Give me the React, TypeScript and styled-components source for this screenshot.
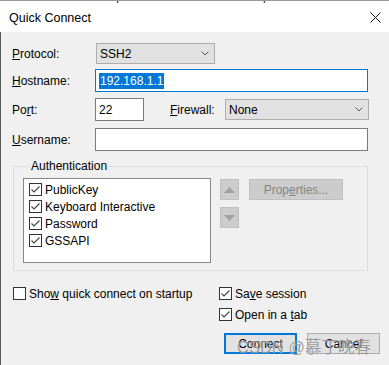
import React from 'react';
import styled, { createGlobalStyle } from 'styled-components';

const GlobalStyle = createGlobalStyle`
  html, body { margin: 0; padding: 0; background: #f0f0f0; }
  body { font-family: 'Liberation Sans', Arial, sans-serif; font-size: 11px; color: #000; }
  * { box-sizing: border-box; }
`;

const Page = styled.div`
  width: 389px;
  height: 365px;
  overflow: hidden;
  position: relative;
  background: #f0f0f0;
`;

/* remains of the main window's menu bar above the dialog */
const MenuStrip = styled.div`
  height: 3px;
  overflow: hidden;
  background: #fff;
  border-top: 1px solid #9a9a9a;
  div {
    display: flex;
    gap: 16px;
    margin-top: -11px;
    margin-left: -22px;
    font-size: 12px;
    line-height: 14px;
    color: #222;
  }
`;

const TitleBar = styled.div`
  height: 29px;
  background: #fff;
  display: flex;
  align-items: center;
  justify-content: space-between;
  padding: 0 8px 0 9px;
  font-size: 12.5px;
`;

const Body = styled.div`
  border-left: 1px solid #5a5a5a;
  height: 333px;
  padding: 11px 0 0 11px;
  display: flex;
  flex-direction: column;
`;

const Row = styled.div<{ $mt?: number }>`
  display: flex;
  align-items: center;
  margin-top: ${(p) => p.$mt ?? 0}px;
`;

const Label = styled.span<{ $w?: number; $ml?: number }>`
  width: ${(p) => p.$w ?? 83}px;
  margin-left: ${(p) => p.$ml ?? 0}px;
  flex: none;
  white-space: nowrap;
  font-size: 12px;
`;

const Combo = styled.div<{ $w: number }>`
  width: ${(p) => p.$w}px;
  height: 21px;
  background: #e1e1e1;
  border: 1px solid #adadad;
  display: flex;
  align-items: center;
  justify-content: space-between;
  padding: 0 5px 0 3px;
  font-size: 12px;
`;

const Input = styled.div<{ $w: number; $focus?: boolean }>`
  width: ${(p) => p.$w}px;
  height: 23px;
  background: #fff;
  border: 1px solid ${(p) => (p.$focus ? '#0078d7' : '#7a7a7a')};
  display: flex;
  align-items: center;
  padding: 0 3px;
  font-size: 12px;
`;

const Selected = styled.span`
  background: #0078d7;
  color: #fff;
  padding: 1px 1px;
`;

const Group = styled.fieldset`
  margin: 9px 0 0 1px;
  width: 355px;
  height: 111px;
  border: 1px solid #dcdcdc;
  padding: 0 0 0 9px;
  display: flex;
  align-items: flex-start;
  legend {
    margin-left: 6px;
    padding: 0 2px;
    font-size: 12px;
    line-height: 13px;
  }
`;

const ListBox = styled.div`
  margin-top: 5px;
  width: 188px;
  height: 85px;
  background: #fff;
  border: 1px solid #828790;
  padding: 4px 0 0 5px;
  display: flex;
  flex-direction: column;
  gap: 4px;
`;

const SideButtons = styled.div`
  margin: 6px 0 0 9px;
  display: flex;
  flex-direction: column;
  gap: 7px;
`;

const ArrowButton = styled.div`
  width: 19px;
  height: 21px;
  background: #cccccc;
  border: 1px solid #bfbfbf;
  display: flex;
  align-items: center;
  justify-content: center;
`;

const PropButton = styled.div`
  margin: 6px 0 0 10px;
  width: 94px;
  height: 21px;
  background: #cccccc;
  border: 1px solid #bfbfbf;
  color: #838383;
  display: flex;
  align-items: center;
  justify-content: center;
  font-size: 12px;
`;

const CheckRow = styled.label`
  display: flex;
  align-items: center;
  gap: 3px;
  height: 13px;
  white-space: nowrap;
  font-size: 12px;
`;

const Box = styled.span`
  width: 13px;
  height: 13px;
  flex: none;
  border: 1px solid #333;
  background: #fff;
  display: flex;
  align-items: center;
  justify-content: center;
`;

const Bottom = styled.div`
  margin-top: 16px;
  display: flex;
`;

const LeftCol = styled.div`
  width: 207px;
  padding-left: 1px;
`;

const RightCol = styled.div`
  display: flex;
  flex-direction: column;
  gap: 8px;
`;

const Buttons = styled.div`
  margin: 4px 0 0 5px;
  display: flex;
  gap: 10px;
`;

const Button = styled.div<{ $default?: boolean }>`
  width: 73px;
  height: 21px;
  background: #e1e1e1;
  border: ${(p) => (p.$default ? '2px solid #0078d7' : '1px solid #adadad')};
  display: flex;
  align-items: center;
  justify-content: center;
  font-size: 12px;
`;

const Watermark = styled.div`
  position: absolute;
  left: 237px;
  top: 334px;
  font-family: 'Liberation Sans', 'Noto Sans CJK SC', sans-serif;
  font-size: 16.5px;
  color: rgba(90, 90, 90, 0.62);
  text-shadow: 0 0 1px rgba(255, 255, 255, 0.9);
  white-space: nowrap;
  pointer-events: none;
`;

const Chevron = () => (
  <svg width="8" height="5" viewBox="0 0 8 5">
    <path d="M0.5 0.5 L4 4 L7.5 0.5" fill="none" stroke="#555" strokeWidth="1" />
  </svg>
);

const Check: React.FC<{ on?: boolean }> = ({ on }) => (
  <Box>
    {on && (
      <svg width="11" height="11" viewBox="0 0 11 11">
        <path d="M1.5 5.5 L4 8 L9.5 2.5" fill="none" stroke="#444" strokeWidth="1.1" />
      </svg>
    )}
  </Box>
);

const Triangle: React.FC<{ up?: boolean }> = ({ up }) => (
  <svg width="11" height="6" viewBox="0 0 11 6">
    <path d={up ? 'M0 6 L5.5 0 L11 6 Z' : 'M0 0 L5.5 6 L11 0 Z'} fill="#a0a0a0" />
  </svg>
);

const authMethods = ['PublicKey', 'Keyboard Interactive', 'Password', 'GSSAPI'];

const App: React.FC = () => (
  <Page>
    <GlobalStyle />
    <MenuStrip>
      <div>
        <span>Options</span>
        <span>Transfer</span>
        <span>Script</span>
        <span>Tools</span>
        <span>Window</span>
        <span>Help</span>
      </div>
    </MenuStrip>
    <TitleBar>
      <span>Quick Connect</span>
      <svg width="11" height="11" viewBox="0 0 11 11">
        <path d="M0.5 0.5 L10.5 10.5 M10.5 0.5 L0.5 10.5" stroke="#111" strokeWidth="1" />
      </svg>
    </TitleBar>
    <Body>
      <Row>
        <Label $w={84}><u>P</u>rotocol:</Label>
        <Combo $w={119}>
          <span>SSH2</span>
          <Chevron />
        </Combo>
      </Row>
      <Row $mt={5}>
        <Label><u>H</u>ostname:</Label>
        <Input $w={273} $focus>
          <Selected>192.168.1.1</Selected>
        </Input>
      </Row>
      <Row $mt={6}>
        <Label>Po<u>r</u>t:</Label>
        <Input $w={49}>22</Input>
        <Label $w={55} $ml={26}><u>F</u>irewall:</Label>
        <Combo $w={144}>
          <span>None</span>
          <Chevron />
        </Combo>
      </Row>
      <Row $mt={7}>
        <Label><u>U</u>sername:</Label>
        <Input $w={273} />
      </Row>
      <Group>
        <legend>Authentication</legend>
        <ListBox>
          {authMethods.map((m) => (
            <CheckRow key={m}>
              <Check on />
              <span>{m}</span>
            </CheckRow>
          ))}
        </ListBox>
        <SideButtons>
          <ArrowButton><Triangle up /></ArrowButton>
          <ArrowButton><Triangle /></ArrowButton>
        </SideButtons>
        <PropButton><span>Prop<u>e</u>rties...</span></PropButton>
      </Group>
      <Bottom>
        <LeftCol>
          <CheckRow>
            <Check />
            <span>Sho<u>w</u> quick connect on startup</span>
          </CheckRow>
        </LeftCol>
        <RightCol>
          <CheckRow>
            <Check on />
            <span>Sa<u>v</u>e session</span>
          </CheckRow>
          <CheckRow>
            <Check on />
            <span>Open in a <u>t</u>ab</span>
          </CheckRow>
          <Buttons>
            <Button $default>Connect</Button>
            <Button>Cancel</Button>
          </Buttons>
        </RightCol>
      </Bottom>
    </Body>
    <Watermark>CSDN @慕丁晚春</Watermark>
  </Page>
);

export default App;
